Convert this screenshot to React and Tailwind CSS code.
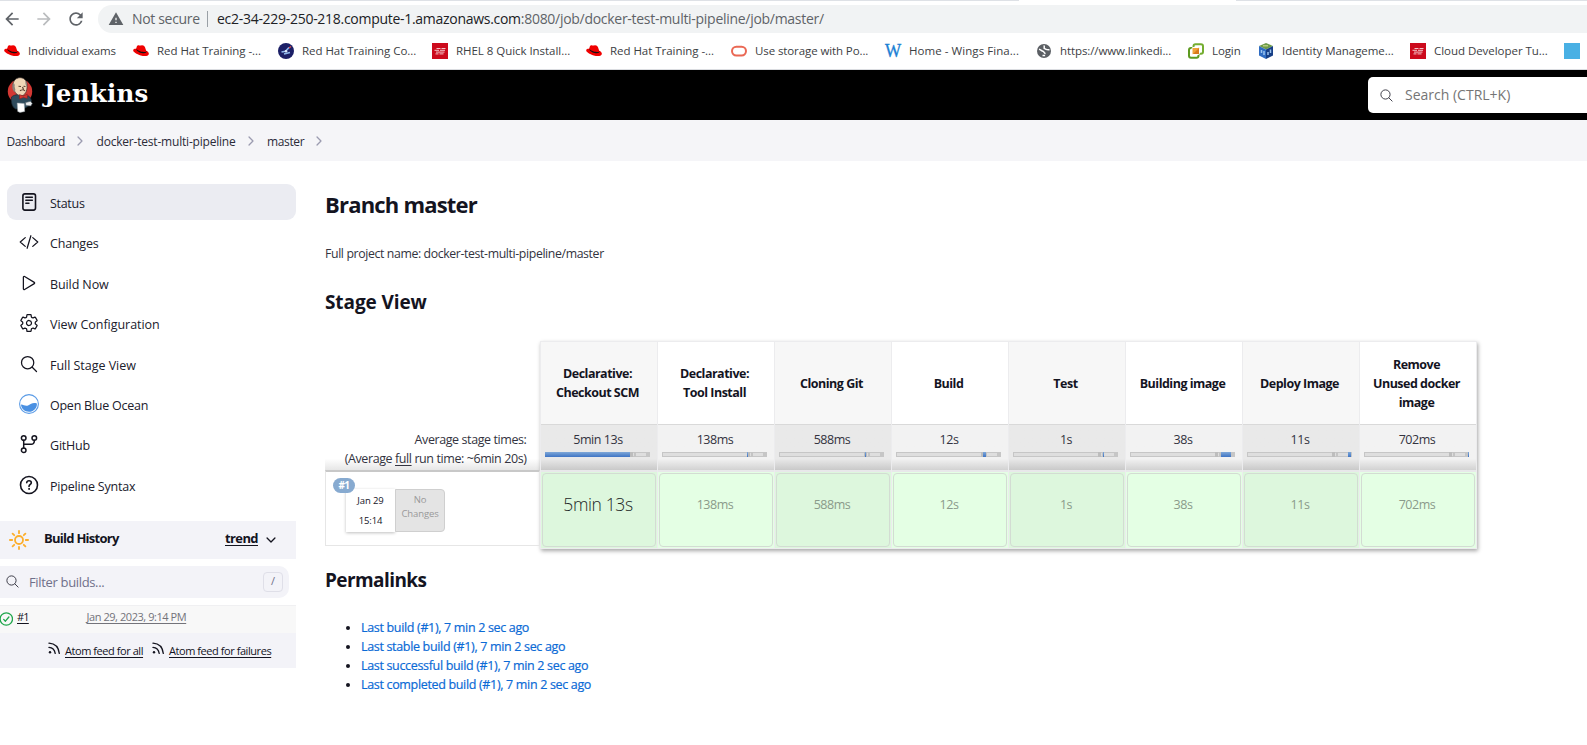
import React from "react";
import {
  IoSearchOutline, IoPlayOutline, IoSettingsOutline,
  IoChevronForward, IoChevronDown, IoCodeSlashOutline,
} from "react-icons/io5";
import { MdArrowBack, MdArrowForward, MdRefresh, MdWarning } from "react-icons/md";

const RedHat = () => (
  <svg width="16" height="16" viewBox="0 0 16 16">
    <path d="M3.6 4.2C4 2.6 4.900 2.200 6 2.400c.8.2 1.500.2 2.200 0 1.700-.4 3.200.3 3.800 1.900l1.200 3.400c1.900.8 3 2.300 2.600 3.500-.6 1.900-4.200 2.500-8 1.300C3.300 11.200-.1 8.900.2 7.100.4 5.900 1.700 5.600 3.100 5.700z" fill="#f00000" />
    <path d="M3.300 5.600c.6 2 5.200 3.900 9.100 3.300.9-.1 1-.6.9-1.100.9 1.600-.5 2.700-3.300 2.500C6.600 10 3 7.900 3.300 5.600z" fill="#111" />
  </svg>
);
const Navy = () => (
  <svg width="16" height="16" viewBox="0 0 16 16">
    <circle cx="8" cy="8" r="8" fill="#1b1f66" />
    <path d="M3.500 9l4-.8 3.500-3.700M6 11l6-1.500" stroke="#8fb8ee" strokeWidth="1.600" fill="none" />
    <path d="M11 5l2-1.500" stroke="#e8504a" strokeWidth="1.200" />
    <circle cx="8" cy="8.300" r="1.300" fill="#dbe8fa" />
  </svg>
);
const RedSquare = () => (
  <svg width="16" height="16" viewBox="0 0 16 16">
    <path d="M0 0h16v16H0z" fill="#cc0a1c" />
    <path d="M4.500 5.500h4M9.500 5.500h4M2.500 7.300h4.500M8 7.300h5M4 9.100h8.500M3.500 10.900h3M7.500 10.900h4" stroke="#f3c3c7" strokeWidth="1" />
  </svg>
);
const Oracle = () => (
  <svg width="16" height="16" viewBox="0 0 16 16">
    <rect x="1" y="3.700" width="14" height="8.800" rx="4.400" fill="none" stroke="#ea6854" strokeWidth="2" />
  </svg>
);
const Wings = () => (
  <span className="w-4 font-['Liberation_Serif',serif] text-[19px] leading-4 tracking-[-2px] text-[#1b7fd4] [-webkit-text-stroke:0.4px_#1b7fd4]"><span className="inline-block origin-left scale-x-90">W</span></span>
);
const Globe = () => (
  <svg width="16" height="16" viewBox="0 0 16 16">
    <circle cx="8" cy="8" r="7" fill="#5b5f64" />
    <path d="M3 6.200c2 .3 2.500 2 4 2.100 1.400.1.600 2.200 2.600 2.200M8.500 2.500c-1 1.500.6 1.800-.8 3.200M8 5.400c2 .6 2.300 1.800 5.500 1.300M6.500 12.500h2.600" stroke="#fff" strokeWidth="1.500" fill="none" />
  </svg>
);
const Vm = () => (
  <svg width="16" height="16" viewBox="0 0 16 16">
    <rect x="5.500" y="1.200" width="9.500" height="9.500" rx="2" fill="#fff" stroke="#74ad30" strokeWidth="2" />
    <rect x="1" y="5" width="9.500" height="9.800" rx="2" fill="none" stroke="#5d9a20" strokeWidth="2" />
    <rect x="4" y="4.500" width="7.500" height="7" rx="1" fill="#f0a23a" stroke="#fff" strokeWidth="1" />
    <path d="M5 11l6-6v6z" fill="#d97a1c" />
  </svg>
);
const Cube = () => (
  <svg width="16" height="16" viewBox="0 0 16 16">
    <path d="M8 0l7 3-7 3.500L1 3z" fill="#6d9b49" />
    <path d="M1 3l7 3.500V16l-7-3.500z" fill="#2f6cc2" />
    <path d="M15 3L8 6.500V16l7-3.500z" fill="#173f86" />
    <path d="M3.500 7v3M6 8v4M10 9v3M12.500 6.500V10" stroke="#9cc4f0" strokeWidth="1.500" />
    <path d="M5 2.800h5" stroke="#c9d98a" strokeWidth="1.200" />
  </svg>
);
const BlueSquare = () => <span className="h-4 w-4 shrink-0 bg-[#49b0e4]" />;

const bookmarks = [
  [RedHat, "Individual exams", "w-[129px]", "tracking-[-0.15px]"],
  [RedHat, "Red Hat Training -...", "w-[145px]", "tracking-[-0.04px]"],
  [Navy, "Red Hat Training Co...", "w-[154px]", "tracking-[-0.05px]"],
  [RedSquare, "RHEL 8 Quick Install...", "w-[154px]", "tracking-[-0.04px]"],
  [RedHat, "Red Hat Training -...", "w-[145px]", "tracking-[-0.04px]"],
  [Oracle, "Use storage with Po...", "w-[154px]", "tracking-[-0.1px]"],
  [Wings, "Home - Wings Fina...", "w-[151px]", "tracking-[0.06px]"],
  [Globe, "https://www.linkedi...", "w-[152px]", "tracking-[-0.1px]"],
  [Vm, "Login", "w-[70px]", "tracking-[-0.1px]"],
  [Cube, "Identity Manageme...", "w-[152px]", "tracking-[-0.05px]"],
  [RedSquare, "Cloud Developer Tu...", "w-[154px]", "tracking-[-0.04px]"],
  [BlueSquare, "", "w-4", ""],
];

const Mascot = () => (
  <svg width="26" height="36" viewBox="0 0 26 36" className="shrink-0">
    <circle cx="13" cy="14.500" r="12.200" fill="#d33833" />
    <path d="M4.500 20c2-1.800 4-2 6.500-2.500l6 2 4.500-.5c1.800 1 2.500 3 3 5l-3 5-5 3H8.500c-3.500-2-4.500-7-4-12z" fill="#2f4b5c" stroke="#1a2a33" strokeWidth=".7" />
    <path d="M6 7C7 2.500 10 .5 13.500.7c4.500.3 6.800 4 6.600 8.500 0 5-2 9.300-6.100 9.600C9.500 18.500 6 14 6 7z" fill="#f0d6b7" stroke="#3b3431" strokeWidth=".7" />
    <path d="M6.100 6c1.500.3 1.900 1.800 1.500 3.500l.8 3.500-1 2C5.300 13 4.700 8.500 6.100 6zM18.300 3.500c2.100 2.500 1.900 5.500 1.400 6.500l-1.200-3z" fill="#8b847c" />
    <path d="M11.500 9.300l2.500.2M16.500 9.300l2 .2M15.500 10l1 2.500M13 13.700c1.500-1 4-.8 5 .2" stroke="#5a4032" strokeWidth="1.100" fill="none" />
    <path d="M12.500 17.500l3.800 1.500 4-1.800v4.200l-4-1-3.800 1.600z" fill="#d33833" stroke="#7f1d1a" strokeWidth=".5" />
    <path d="M10.200 26l7 .5.500 8-4.700.9-2.300-1z" fill="#fff" stroke="#9aa5ab" strokeWidth=".5" />
    <path d="M18.500 25.500l5-1.200 1.800 2.200-1.500 2.500-5-.5z" fill="#e9ebec" stroke="#4b5963" strokeWidth=".6" />
  </svg>
);

const Details = () => (
  <svg width="20" height="20" viewBox="0 0 20 20" fill="none" stroke="#14141f" strokeLinecap="round">
    <rect x="3.900" y="1.900" width="12.600" height="16.200" rx="2" strokeWidth="1.600" />
    <path d="M6.800 5.300h6.600M6.800 8.300h6.600M6.800 11.300h3.200" strokeWidth="1.400" />
  </svg>
);
const Ocean = () => (
  <svg width="20" height="20" viewBox="0 0 20 20">
    <circle cx="10" cy="10" r="9.400" fill="#fff" stroke="#5a9be6" strokeWidth="1.100" />
    <path d="M2 10.500c3 .2 4.500 2.200 7.500.7 2.500-1.500 4.500-3.200 8.400-1.800.4 4.500-3.200 8.300-7.900 8.300S2.200 14.500 2 10.500z" fill="#4a90e2" />
  </svg>
);
const Branch = () => (
  <svg width="20" height="20" viewBox="0 0 20 20" fill="none" stroke="#14141f" strokeWidth="1.500" strokeLinecap="round">
    <circle cx="4.700" cy="4" r="2.300" />
    <circle cx="15.300" cy="4" r="2.300" />
    <circle cx="4.700" cy="16.200" r="2.300" />
    <path d="M4.700 6.300v7.600M15.300 6.300v1a3 3 0 0 1-3 3H4.700" />
  </svg>
);
const Help = () => (
  <svg width="20" height="20" viewBox="0 0 20 20" fill="none" stroke="#14141f" strokeWidth="1.600" strokeLinecap="round" strokeLinejoin="round">
    <circle cx="10" cy="10" r="8.500" />
    <path d="M7.700 7.700c.2-1.500 1.200-2 2.300-2 1.300 0 2.300.8 2.300 2 0 1.700-2.300 1.800-2.300 3.800" />
    <circle cx="10" cy="13.900" r=".5" fill="#14141f" strokeWidth="1" />
  </svg>
);
const Sun = () => (
  <svg width="20" height="20" viewBox="0 0 20 20" fill="none" stroke="#fcae2c" strokeWidth="1.800" strokeLinecap="round">
    <circle cx="10" cy="10" r="4" />
    <path d="M10 .9v2.300M10 16.800v2.300M.9 10h2.300M16.800 10h2.300M3.600 3.600l1.600 1.600M14.800 14.800l1.600 1.600M3.600 16.400l1.600-1.600M14.800 5.200l1.600-1.600" />
  </svg>
);
const Success = () => (
  <svg width="14" height="14" viewBox="0 0 14 14" fill="none" stroke="#1ea64b" strokeWidth="1.300" strokeLinecap="round" strokeLinejoin="round" className="-ml-px mt-[3px] shrink-0">
    <circle cx="7.300" cy="7" r="6.200" />
    <path d="M4.700 7.400l1.700 1.800 3.500-4.200" />
  </svg>
);
const Rss = () => (
  <svg width="12" height="13" viewBox="0 0 12 13" fill="none" stroke="#14141f" strokeWidth="1.300" strokeLinecap="round" className="mb-[3px] shrink-0">
    <circle cx="2" cy="10.300" r="1.200" fill="#14141f" stroke="none" />
    <path d="M1 5.400c3.600.3 5.600 2.600 6.200 6M1 1.100c6 .4 9.700 4.400 10.300 10.300" />
  </svg>
);

const tasks = [
  [Details, "Status", "tracking-[-0.3px]"],
  [IoCodeSlashOutline, "Changes", "tracking-[-0.2px]"],
  [IoPlayOutline, "Build Now", "tracking-[-0.1px]"],
  [IoSettingsOutline, "View Configuration", "tracking-[-0.03px]"],
  [IoSearchOutline, "Full Stage View", "tracking-[-0.03px]"],
  [Ocean, "Open Blue Ocean", "tracking-[-0.25px]"],
  [Branch, "GitHub", "tracking-[-0.2px]"],
  [Help, "Pipeline Syntax", "tracking-[-0.2px]"],
];

// left and width of each stage's share of the full run, in pixels of a 105px bar
const stages = [
  [["Declarative:", "Checkout SCM"], "5min 13s", 0, 85],
  [["Declarative:", "Tool Install"], "138ms", 85, 1],
  [["Cloning Git"], "588ms", 86, 1],
  [["Build"], "12s", 87, 3],
  [["Test"], "1s", 90, 1],
  [["Building image"], "38s", 91, 10],
  [["Deploy Image"], "11s", 101, 3],
  [["Remove", "Unused docker", "image"], "702ms", 104, 1],
];

function Bar({ left, width }) {
  return (
    <div className="relative ml-1 h-[5px] w-[105px] self-start border border-[#c6c6c6] bg-[#dedede]">
      <div className="absolute -top-px left-[84px] h-[5px] w-[3px] bg-[#bdbdbd]" />
      <div className="absolute -top-px left-[88px] h-[5px] w-[2px] bg-[#c4c4c4]" />
      <div className="absolute -top-px left-[100px] h-[5px] w-[4px] bg-[#c6c6c6]" />
      <div className="absolute -top-px h-[5px] bg-gradient-to-b from-[#7fa8d8] to-[#3f74c4]" style={{ left: left - 1, width }} />
    </div>
  );
}

function Stage({ stage, index }) {
  const [name, time, left, width] = stage;
  const odd = index % 2 === 0;
  return (
    <div className="flex w-[117px] flex-col border-r border-[#ececee]">
      <div className={"flex h-[82px] flex-col items-center justify-center pr-0.5 text-[12.500px] font-bold leading-[19px] tracking-[-0.5px] text-[#14141f] " + (odd ? "bg-[#f7f7f7]" : "bg-white")}>
        {name.map((l) => <span key={l}>{l}</span>)}
      </div>
      <div className={"flex h-[46px] flex-col items-center border-t border-[#d9d9d9] pt-[6px] text-[12.500px] leading-[18px] tracking-[-0.45px] text-[#333340] bg-gradient-to-b " + (odd ? "from-[#e9e9e9] from-75% to-[#c9c9c9]" : "from-[#f2f2f2] from-75% to-[#d2d2d2]")}>
        <span className="mb-[3px] mr-px">{time}</span>
        <Bar left={left} width={width} />
      </div>
      <div className={"flex h-[78px] border-t-2 border-[#e8e8ea] px-px pt-px pb-px " + (odd ? "bg-[#ddf7dd]" : "bg-[#e4ffe4]")}>
        <div className={"flex flex-1 items-center justify-center rounded-[4px] border border-[#d3dcd3] pr-px " + (index === 0 ? "pb-[11px] text-[17.500px] font-light tracking-[-0.38px] text-[#1c2626]" : "pb-[10px] text-[12.500px] tracking-[-0.45px] text-[#8a9a8a]")}>
          {time}
        </div>
      </div>
    </div>
  );
}

const links = ["Last build (#1), 7 min 2 sec ago", "Last stable build (#1), 7 min 2 sec ago", "Last successful build (#1), 7 min 2 sec ago", "Last completed build (#1), 7 min 2 sec ago"];

export default function App() {
  return (
    <div className="flex h-[745px] w-[1587px] flex-col overflow-hidden bg-white font-['Open_Sans','Noto_Sans',sans-serif] text-[#14141f]">
      <div className="flex h-px shrink-0 justify-between">
        <div className="w-[1019px] bg-[#dee1e6]" />
        <div className="w-[351px] bg-[#dee1e6]" />
      </div>
      <div className="flex h-9 shrink-0 items-center pl-1 text-[#5f6368]">
        <MdArrowBack className="-ml-0.5 mr-3 h-5 w-5" />
        <MdArrowForward className="mr-3 h-5 w-5 text-[#babcbe]" />
        <MdRefresh className="mr-3 h-5 w-5" />
        <div className="flex h-7 flex-1 items-center rounded-l-full bg-[#f1f3f4] pl-[10px] text-[14px]">
          <MdWarning className="mr-[8px] h-4 w-4" />
          <span className="mb-px w-[75px] whitespace-nowrap tracking-[-0.33px]">Not secure</span>
          <span className="mr-[9px] h-4 w-px bg-[#9aa0a6]" />
          <span className="mb-px whitespace-nowrap tracking-[-0.285px]"><span className="text-[#202124]">ec2-34-229-250-218.compute-1.amazonaws.com</span>:8080/job/docker-test-multi-pipeline/job/master/</span>
        </div>
      </div>
      <div className="flex h-[33px] shrink-0 items-center border-b border-[#dadce0] pb-1 pl-1 text-[11.500px] text-[#3c4043]">
        {bookmarks.map(([Icon, label, w, tr], i) => (
          <div key={i} className={"flex shrink-0 items-center gap-2 whitespace-nowrap " + w}>
            <Icon /><span className={tr}>{label}</span>
          </div>
        ))}
      </div>

      <header className="flex h-[50px] shrink-0 items-center justify-between bg-black pl-[7px]">
        <div className="flex items-center gap-[11px]">
          <Mascot />
          <span className="mb-px font-['DejaVu_Serif',serif] text-[24.500px] font-bold leading-none tracking-[0.25px] text-white">Jenkins</span>
        </div>
        <div className="flex h-9 w-[219px] items-center rounded-l-[5px] bg-white pl-[11px] text-[14px] text-[#757575]">
          <IoSearchOutline className="mr-[11px] h-[15px] w-[15px] text-[#33333f]" />
          <span className="mb-px">Search (CTRL+K)</span>
        </div>
      </header>

      <nav className="flex h-[41px] shrink-0 items-center bg-[#f5f5f8] pl-[6.500px] pt-[3px] text-[12px] text-[#2b2b38]">
        <span className="w-[66.500px] tracking-[-0.38px]">Dashboard</span>
        <IoChevronForward className="mb-0.5 mr-[9.500px] h-3.5 w-3.5 text-[#9b9bb0]" />
        <span className="w-[147px] tracking-[-0.2px]">docker-test-multi-pipeline</span>
        <IoChevronForward className="mb-0.5 mr-[9.500px] h-3.5 w-3.5 text-[#9b9bb0]" />
        <span className="w-[45px] tracking-[-0.35px]">master</span>
        <IoChevronForward className="mb-0.5 h-3.5 w-3.5 text-[#9b9bb0]" />
      </nav>

      <div className="flex">
        <aside className="w-[296px] shrink-0 pt-[23px]">
          <div className="flex flex-col gap-[4.400px] pl-[7px]">
            {tasks.map(([Icon, label, tr], i) => (
              <div key={label} className={"flex h-9 items-center gap-[11px] rounded-[9px] pl-3 text-[12.500px] text-[#20202c] " + (i === 0 ? "bg-[#ebecf2]" : "")}>
                <Icon className="h-5 w-5 text-[#14141f]" />
                <span className={(i === 1 ? "mt-[3px] " : "mt-[5px] ") + tr}>{label}</span>
              </div>
            ))}
          </div>
          <div className="mt-[18px] flex h-[38px] items-center bg-[#f3f3f8] pl-[9px] text-[13px] font-bold">
            <Sun />
            <span className="mb-px ml-[15px] w-[181px] tracking-[-0.74px]">Build History</span>
            <span className="mb-px w-[39px] tracking-[-0.6px] underline underline-offset-2">trend</span>
            <IoChevronDown className="mt-px h-[14px] w-[14px]" />
          </div>
          <div className="mt-[7px] flex h-8 w-[289px] items-center rounded-r-[10px] bg-[#f3f3f8] pl-[5px] pr-[6px]">
            <IoSearchOutline className="h-[15px] w-[15px] text-[#33333f]" />
            <span className="ml-[9px] mt-[2px] flex-1 text-[13px] tracking-[-0.34px] text-[#70708a]">Filter builds...</span>
            <span className="flex h-5 w-5 items-center justify-center rounded-[4px] border border-[#dfdfe8] text-[11px] text-[#70708a]">/</span>
          </div>
          <div className="mt-[7px] flex h-[28px] items-center border-t border-[#f0f0f2] bg-[#f8f8f8] pb-[3px] text-[11px]">
            <Success />
            <span className="ml-[4px] w-[69.500px] tracking-[-0.8px] underline underline-offset-2">#1</span>
            <span className="tracking-[-0.44px] text-[#73737a] underline underline-offset-2">Jan 29, 2023, 9:14 PM</span>
          </div>
          <div className="flex h-[35px] items-center bg-[#f3f3f8] pl-[48px] text-[11px] tracking-[-0.44px]">
            <Rss /><span className="ml-[5px] mt-[3px] w-[87px] whitespace-nowrap underline underline-offset-2">Atom feed for all</span>
            <Rss /><span className="ml-[5px] mt-[3px] whitespace-nowrap underline underline-offset-2">Atom feed for failures</span>
          </div>
        </aside>

        <main className="flex flex-col pl-[29px]">
          <h1 className="mt-[27px] text-[22px] font-bold leading-8 tracking-[-0.8px]">Branch master</h1>
          <p className="mt-[24px] text-[12.300px] leading-5 tracking-[-0.38px] text-[#333340]">Full project name: docker-test-multi-pipeline/master</p>
          <h2 className="mt-[24px] text-[19px] font-bold leading-7 tracking-[-0.1px]">Stage View</h2>
          <div className="mt-[25px] flex">
            <div className="flex w-[214.500px] flex-col pt-[83px]">
              <div className="flex h-[46px] flex-col items-end bg-gradient-to-b from-white from-75% to-[#e6e6e6] pr-[13px] pt-[6px] text-[12.500px] leading-[19px] tracking-[-0.41px] text-[#333340]">
                <span>Average stage times:</span>
                <span>(Average <u className="underline-offset-2">full</u> run time: ~6min 20s)</span>
              </div>
              <div className="relative h-[76px] border border-t-2 border-[#e6e6e6] border-t-[#c8c8c8]">
                <div className="absolute left-[20px] top-[17px] flex h-[43px] text-center text-[9.500px] tracking-[-0.1px]">
                  <div className="w-[49px] bg-white pt-[2px] leading-5 shadow-[0_1px_3px_rgba(0,0,0,0.25)]">Jan 29<br />15:14</div>
                  <div className="w-[50px] rounded-r-[4px] border border-[#cfcfcf] bg-[#e4e4e4] pt-[3px] leading-[14px] text-[#999]">No<br />Changes</div>
                </div>
                <div className="absolute left-[7px] top-[6px] flex h-[15px] w-[22px] items-center justify-center rounded-full bg-[#87aad0] text-[10px] font-bold tracking-[-0.5px] text-white">#1</div>
              </div>
            </div>
            <div className="flex border border-r-0 border-[#ececee] shadow-[1px_2px_4px_rgba(0,0,0,0.35)]">
              {stages.map((s, i) => <Stage key={i} stage={s} index={i} />)}
            </div>
          </div>
          <h2 className="mt-[17px] text-[19px] font-bold leading-7 tracking-[-0.58px]">Permalinks</h2>
          <ul className="mt-[24px] list-disc pl-9 text-[12.500px] leading-[19px] tracking-[-0.33px]">
            {links.map((l) => <li key={l}><a className="text-[#0b6ad6] [-webkit-text-stroke:0.2px_#0b6ad6]">{l}</a></li>)}
          </ul>
        </main>
      </div>
    </div>
  );
}
